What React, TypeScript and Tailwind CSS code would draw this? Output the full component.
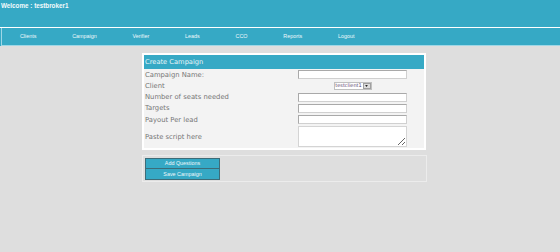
import React from "react";

const navItems = ["Clients", "Campaign", "Verifier", "Leads", "CCO", "Reports", "Logout"];

const fields = [
  { label: "Campaign Name:", kind: "input" },
  { label: "Client", kind: "select" },
  { label: "Number of seats needed", kind: "input" },
  { label: "Targets", kind: "input" },
  { label: "Payout Per lead", kind: "input" },
];

function ClientSelect() {
  return (
    <div className="flex h-[8.5px] w-[38px] items-stretch border border-[#c0c0c0] bg-white">
      <span className="flex flex-1 items-center justify-center text-[5px] leading-none text-[#5a4470]">
        testclient1
      </span>
      <span className="flex w-[8px] items-center justify-center border border-[#a0a0a0] bg-[#dcdcdc]">
        <svg width="3" height="2" viewBox="0 0 4 3">
          <path d="M0 0h4L2 3z" fill="#222" />
        </svg>
      </span>
    </div>
  );
}

export default function App() {
  return (
    <div className="min-h-[252px] bg-[#dedede] font-['Liberation_Sans',Arial,sans-serif]">
      {/* Header */}
      <div className="h-[27px] bg-[#36a9c5] pl-[1px] pt-[1px] text-[6.3px] font-bold leading-[9px] text-[#f4fafc]">
        Welcome : testbroker1
      </div>

      {/* Nav */}
      <div className="border-t border-white bg-[#36a9c5] pl-[1px]">
        <div className="flex h-[18px] items-center border-b border-l border-[#9fd7e6]">
          {navItems.map((item) => (
            <span key={item} className="px-[17.9px] text-[5.4px] text-[#eef8fb]">
              {item}
            </span>
          ))}
        </div>
      </div>

      {/* Create campaign form */}
      <div className="ml-[142px] mt-[7px] w-[284px] border-2 border-white bg-[#f3f3f3] font-['DejaVu_Sans',Verdana,sans-serif]">
        <div className="flex h-[14px] items-center bg-[#36a9c5] pl-[1px] text-[6.7px] text-[#eaf6f9]">
          Create Campaign
        </div>
        {fields.map((f) => (
          <div key={f.label} className="flex h-[11.3px] items-center">
            <span className="w-[154px] pl-[1px] text-[6.8px] text-[#767676]">{f.label}</span>
            <div className="flex w-[109px] justify-center">
              {f.kind === "select" ? (
                <ClientSelect />
              ) : (
                <div className="h-[9px] w-[109px] border border-[#a9a9a9] border-b-[#d0d0d0] border-r-[#d0d0d0] bg-white" />
              )}
            </div>
          </div>
        ))}
        <div className="flex h-[22.5px] items-center">
          <span className="w-[154px] pl-[1px] text-[6.8px] text-[#767676]">Paste script here</span>
          <textarea className="h-[21px] w-[109px] resize border border-[#d4d4d4] bg-white p-0 outline-none" />
        </div>
      </div>

      {/* Actions */}
      <div className="ml-[142px] mt-[5px] w-[285px] border border-[#ececec] p-[2px] pb-[1.5px]">
        <div className="flex w-[75px] flex-col">
          <button className="h-[11.5px] border border-[#3d6c78] bg-[#36a9c5] text-[5.4px] leading-none text-[#eef8fb]">
            Add Questions
          </button>
          <button className="-mt-px h-[11.5px] border border-[#3d6c78] bg-[#36a9c5] text-[5.4px] leading-none text-[#eef8fb]">
            Save Campaign
          </button>
        </div>
      </div>
    </div>
  );
}
